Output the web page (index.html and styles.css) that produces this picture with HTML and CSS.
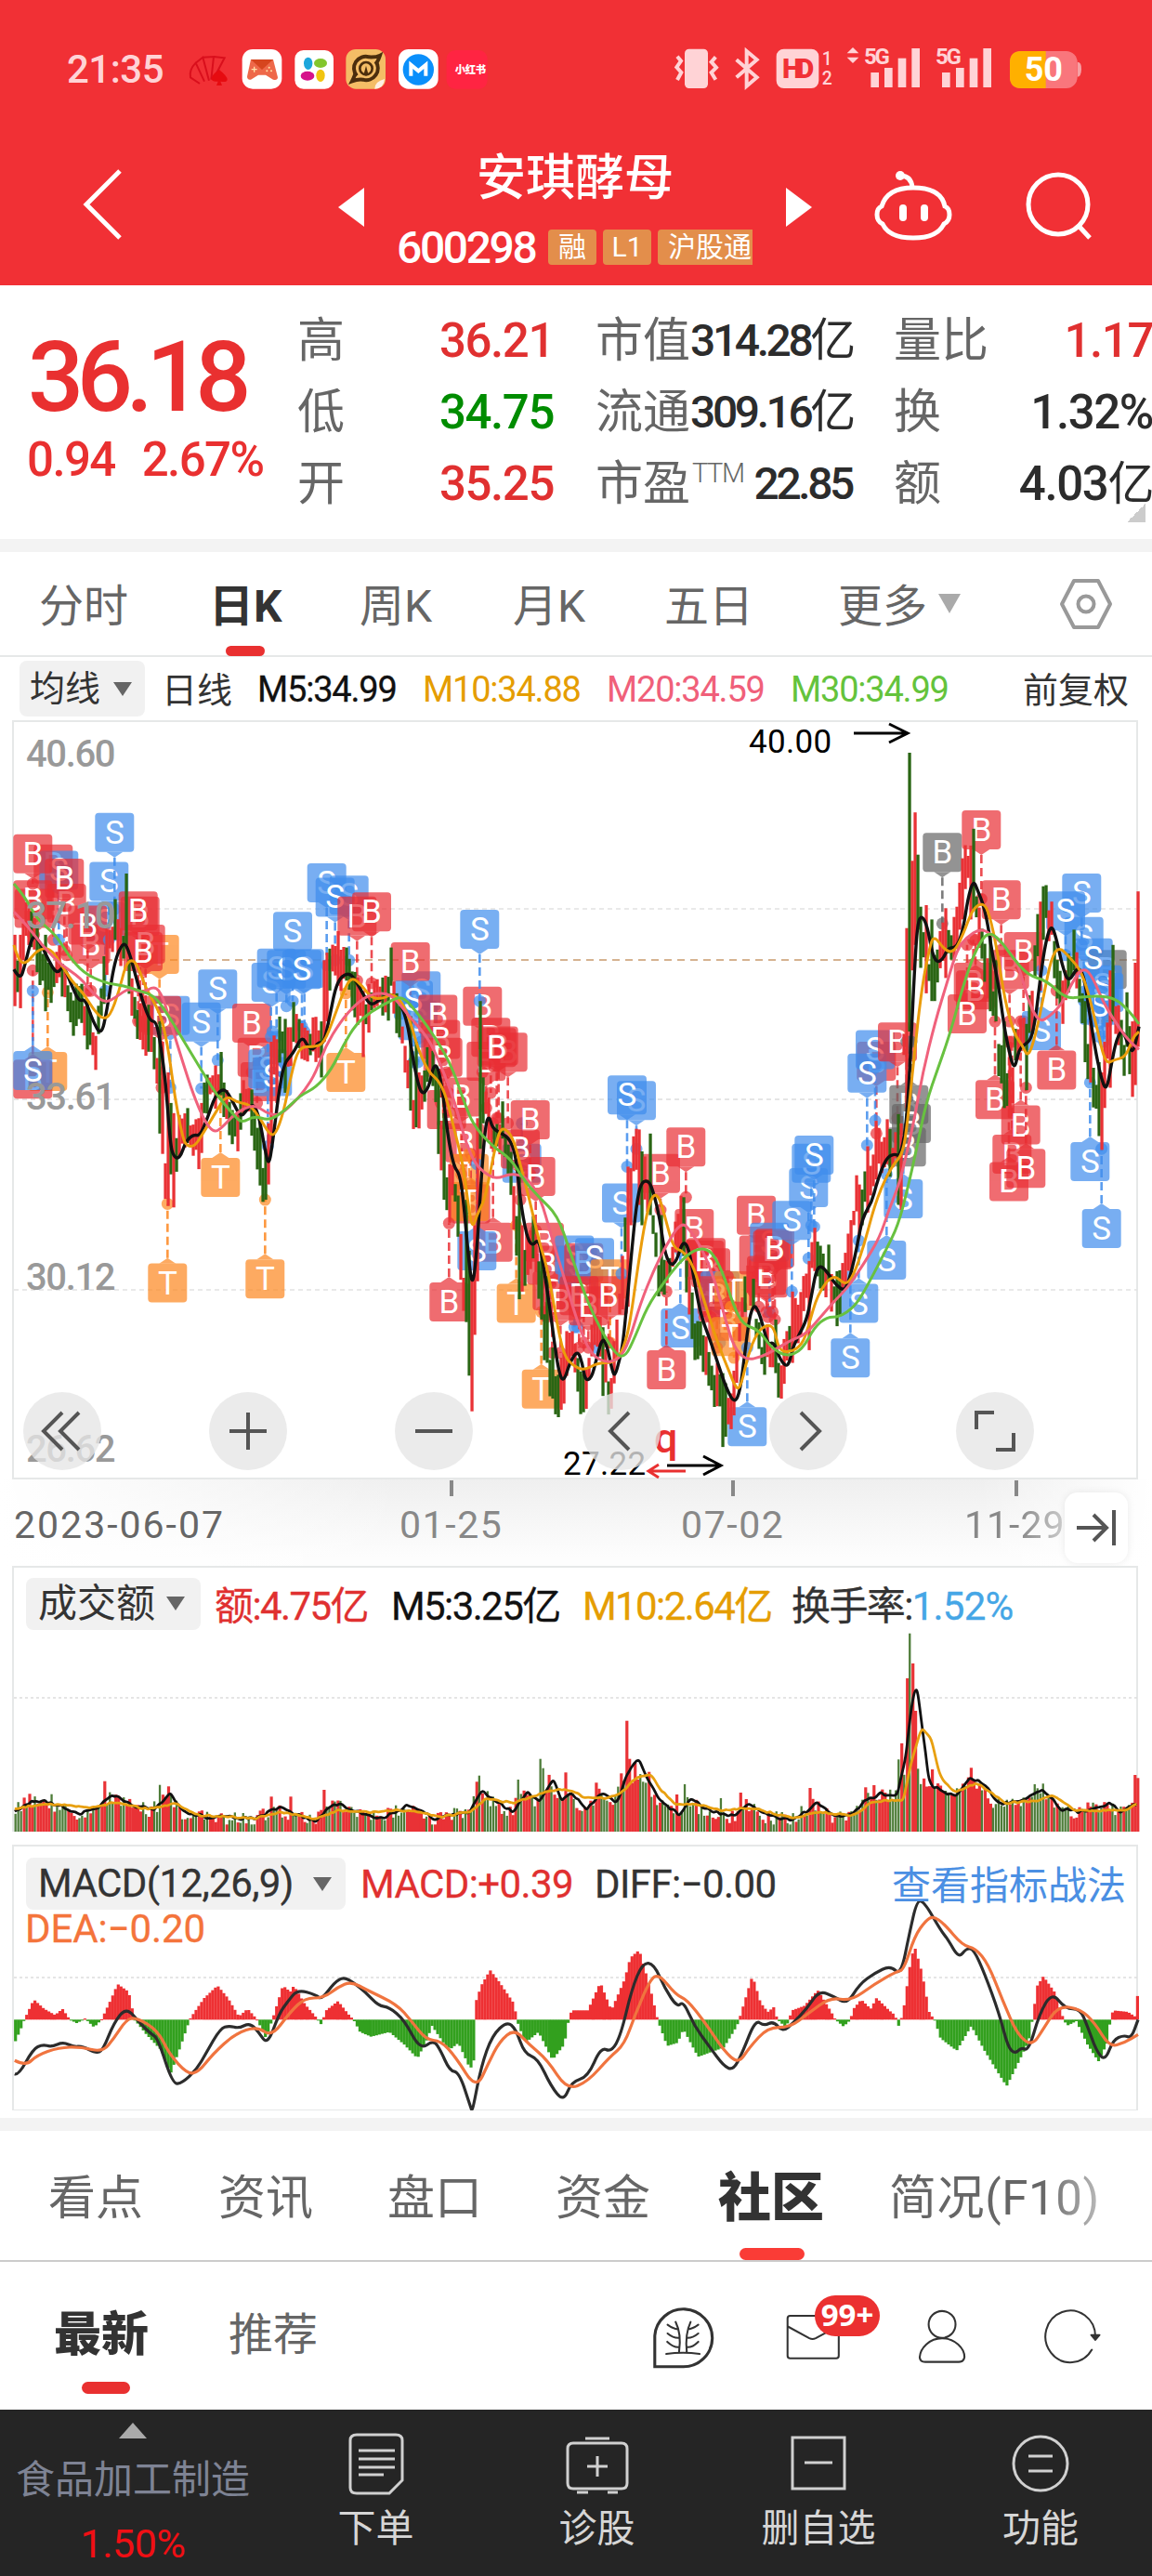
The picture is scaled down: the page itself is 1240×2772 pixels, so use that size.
FILE: index.html
```html
<!DOCTYPE html>
<html lang="zh-CN">
<head>
    <meta charset="UTF-8">
    <meta name="viewport" content="width=device-width, initial-scale=1.0">
    <title>安琪酵母 600298</title>
    <link rel="stylesheet" href="styles.css">
</head>
<body>
    <header class="header">
        <!-- Status bar -->
        <div class="status-bar">
            <span class="clock">21:35</span>
            <svg class="notices" width="340" height="60" viewBox="0 0 1020 180">
                <g fill="none" stroke="#d90f1c" stroke-width="6">
                    <path d="M75 135L45 115Q40 90 62 68L90 128M62 68L85 50L105 125M85 50L120 48L112 122M120 48L155 52L130 100"/>
                </g>
                <path d="M138 90Q165 112 164 122T142 128L147 141H129L134 128Q112 130 113 118T138 90Z" fill="#e60b10"/>
                <rect x="212" y="24" width="128" height="128" rx="34" fill="#fff"/>
                <path d="M240 57H312L327 115Q326 126 312 122L288 107H264L240 122Q228 124 228 112Z" fill="#ee6849"/>
                <path d="M240 57H312L276 90Z" fill="#d6451e"/>
                <path d="M251 80V98M242 89H260" stroke="#ffe2a8" stroke-width="4"/>
                <g fill="#ffe2a8"><circle cx="299" cy="83" r="3"/><circle cx="292" cy="94" r="3"/><circle cx="306" cy="94" r="3"/></g>
                <rect x="382" y="27" width="125" height="125" rx="28" fill="#fff"/>
                <ellipse cx="425" cy="70" rx="14" ry="20" fill="#1ca6dc"/>
                <ellipse cx="465" cy="69" rx="21" ry="15" fill="#83c62c"/>
                <ellipse cx="423" cy="110" rx="22" ry="15" fill="#d6118b"/>
                <ellipse cx="465" cy="109" rx="14" ry="20" fill="#f1c40f"/>
                <rect x="547" y="24" width="128" height="128" rx="32" fill="#f4bd66"/>
                <path d="M582 110A38 38 0 0 1 622 49Q645 50 657 44Q652 60 645 70" fill="none" stroke="#4c2e0d" stroke-width="12"/>
                <path d="M643 63A38 38 0 0 1 602 122Q585 120 567 127Q573 115 577 104" fill="none" stroke="#4c2e0d" stroke-width="12"/>
                <circle cx="612" cy="86" r="20" fill="none" stroke="#4c2e0d" stroke-width="8"/>
                <path d="M612 77L618 100L612 110L606 100Z" fill="#4c2e0d"/>
                <path d="M640 152Q640 128 672 120Q670 150 640 152Z" fill="#fff0e4"/>
                <rect x="717" y="24" width="128" height="128" rx="32" fill="#fff"/>
                <circle cx="781" cy="90" r="50" fill="#0a8ffb"/>
                <path d="M757 110V74L781 94L805 74V110" fill="none" stroke="#fff" stroke-width="12"/>
                <rect x="872" y="27" width="132" height="125" rx="28" fill="#ff2442"/>
                <text x="899" y="103" class="notice-text">小红书</text>
            </svg>
            <svg class="signals" width="470" height="70" viewBox="0 0 1410 210">
                <g fill="#ffd3d6">
                    <rect x="81" y="38" width="75" height="127" rx="14"/>
                    <rect x="377" y="38" width="137" height="127" rx="24"/>
                    <path d="M624 33L643 52H605ZM624 84L643 65H605Z"/>
                    <rect x="682" y="114" width="26" height="48"/><rect x="726" y="99" width="26" height="63"/><rect x="770" y="68" width="26" height="94"/><rect x="814" y="36" width="26" height="126"/>
                    <rect x="912" y="114" width="26" height="48"/><rect x="957" y="99" width="26" height="63"/><rect x="1001" y="68" width="26" height="94"/><rect x="1045" y="36" width="26" height="126"/>
                </g>
                <g fill="none" stroke="#ffd3d6" stroke-width="12">
                    <path d="M57 62L69 77L55 97L70 114L57 138M181 64L167 80L183 98L167 114L181 137"/>
                    <path d="M248 73L314 130L281 158V45L314 73L248 130"/>
                </g>
                <text x="396" y="133" class="hd">HD</text>
                <text x="524" y="90" class="sim">1</text>
                <text x="524" y="153" class="sim">2</text>
                <text x="660" y="86" class="net">5G</text>
                <text x="891" y="86" class="net">5G</text>
                <path d="M1349 80Q1363 80 1362 104T1349 128Z" fill="#f6a0a4"/>
                <rect x="1131" y="45" width="218" height="120" rx="36" fill="#f9767c"/>
                <path d="M1247 45H1167Q1131 45 1131 81V129Q1131 165 1167 165H1247Z" fill="#ffb000"/>
                <text x="1178" y="142" class="battery">50</text>
            </svg>
        </div>
        <!-- Stock title -->
        <div class="nav">
            <svg class="back" width="46" height="80" viewBox="0 0 46 80"><path d="M41 4L5 40L41 76" fill="none" stroke="#fff" stroke-width="5"/></svg>
            <svg class="prev" width="28" height="42" viewBox="0 0 28 42"><path d="M0 21L28 0V42Z" fill="#fff"/></svg>
            <div class="stock">
                <div class="stock-name">安琪酵母</div>
                <div class="stock-code"><span class="code">600298</span><span class="tag">融</span><span class="tag">L1</span><span class="tag tag-cut">沪股通</span></div>
            </div>
            <svg class="next" width="28" height="42" viewBox="0 0 28 42"><path d="M28 21L0 0V42Z" fill="#fff"/></svg>
            <svg class="robot" width="84" height="80" viewBox="0 0 84 80" fill="none" stroke="#fff" stroke-width="5">
                <circle cx="28" cy="7" r="5" fill="#fff" stroke="none"/>
                <path d="M28 7Q40 7 41 20"/>
                <path d="M42 20Q72 20 76 40Q81 42 81 49T75 59Q68 74 42 74T9 59Q3 56 3 49T8 40Q14 20 42 20Z"/>
                <path d="M31 42V52M54 42V52" stroke-width="8" stroke-linecap="round"/>
            </svg>
            <svg class="search" width="76" height="76" viewBox="0 0 76 76" fill="none" stroke="#fff" stroke-width="5"><circle cx="36" cy="35" r="32"/><path d="M58 58L70 71"/></svg>
        </div>
    </header>

    <!-- Quote -->
    <section class="quote">
        <div class="price">
            <div class="price-now">36.18</div>
            <div class="price-change"><span>0.94</span><span>2.67%</span></div>
        </div>
        <div class="cell"><span class="label">高</span><span class="value up">36.21</span></div>
        <div class="cell mid"><span class="label">市值</span><span class="value">314.28<i>亿</i></span></div>
        <div class="cell"><span class="label">量比</span><span class="value up">1.17</span></div>
        <div class="cell"><span class="label">低</span><span class="value down">34.75</span></div>
        <div class="cell mid"><span class="label">流通</span><span class="value">309.16<i>亿</i></span></div>
        <div class="cell"><span class="label">换</span><span class="value">1.32%</span></div>
        <div class="cell"><span class="label">开</span><span class="value up">35.25</span></div>
        <div class="cell mid"><span class="label">市盈<sup>TTM</sup></span><span class="value">22.85</span></div>
        <div class="cell"><span class="label">额</span><span class="value">4.03<i>亿</i></span></div>
        <div class="corner"></div>
    </section>

    <!-- Period tabs -->
    <nav class="period-tabs">
        <span class="tab">分时</span>
        <span class="tab active">日K</span>
        <span class="tab">周K</span>
        <span class="tab">月K</span>
        <span class="tab">五日</span>
        <span class="tab">更多<i class="caret"></i></span>
        <svg width="58" height="58" viewBox="0 0 58 58" fill="none" stroke="#999" stroke-width="4"><path d="M16 4H42L55 29L42 54H16L3 29Z" stroke-linejoin="round"/><circle cx="29" cy="29" r="8.5"/></svg>
    </nav>

    <div class="legend ma-legend">
        <span class="picker">均线<i class="caret"></i></span>
        <span class="dark cjk">日线</span>
        <span class="num black">M5:34.99</span>
        <span class="num gold">M10:34.88</span>
        <span class="num pink">M20:34.59</span>
        <span class="num green">M30:34.99</span>
        <span class="dark adjust cjk">前复权</span>
    </div>

    <!-- Candles -->
    <div class="panel k-panel">
        <svg id="kChart" width="1240" height="817" viewBox="0 775 1240 817"></svg>
        <div class="controls">
            <svg viewBox="0 0 84 84"><path d="M42 22L22 42L42 62M60 22L40 42L60 62"/></svg>
            <svg viewBox="0 0 84 84"><path d="M42 22V62M22 42H62"/></svg>
            <svg viewBox="0 0 84 84"><path d="M22 42H62"/></svg>
            <svg viewBox="0 0 84 84"><path d="M50 22L30 42L50 62"/></svg>
            <svg viewBox="0 0 84 84"><path d="M34 22L54 42L34 62"/></svg>
            <svg viewBox="0 0 84 84"><path d="M22 40V22H41M62 44V62H43"/></svg>
        </div>
    </div>

    <div class="dates">
        <span class="first">2023-06-07</span>
        <span class="tick">01-25</span>
        <span class="tick">07-02</span>
        <span class="tick last">11-29</span>
        <div class="to-end"><svg width="46" height="42" viewBox="0 0 46 42" fill="none" stroke="#555" stroke-width="4"><path d="M2 21H32M20 7L34 21L20 35M42 2V40"/></svg></div>
    </div>

    <!-- Turnover -->
    <div class="panel vol-panel">
        <svg id="volChart" width="1240" height="286" viewBox="0 1685 1240 286"></svg>
        <div class="legend vol-legend">
            <span class="picker">成交额<i class="caret"></i></span>
            <span class="red num">额:4.75亿</span>
            <span class="black num">M5:3.25亿</span>
            <span class="gold num">M10:2.64亿</span>
            <span class="dark num">换手率:<b>1.52%</b></span>
        </div>
    </div>

    <!-- MACD -->
    <div class="panel macd-panel">
        <svg id="macdChart" width="1240" height="286" viewBox="0 1985 1240 286"></svg>
        <div class="legend macd-legend">
            <span class="picker num">MACD(12,26,9)<i class="caret"></i></span>
            <span class="red num">MACD:+0.39</span>
            <span class="dark num">DIFF:−0.00</span>
            <a class="link">查看指标战法</a>
        </div>
        <div class="dea">DEA:−0.20</div>
    </div>

    <nav class="info-tabs">
        <span class="tab">看点</span>
        <span class="tab">资讯</span>
        <span class="tab">盘口</span>
        <span class="tab">资金</span>
        <span class="tab active">社区</span>
        <span class="tab fade">简况(F10)</span>
    </nav>

    <div class="sub-tabs">
        <span class="tab active">最新</span>
        <span class="tab">推荐</span>
        <div class="sub-icons">
            <svg width="540" height="110" viewBox="0 0 1568 319.4" fill="none" stroke="#333" stroke-width="6" stroke-linejoin="round" stroke-linecap="round">
                <path d="M72 252V155A90 90 0 1 1 162 252Z" stroke-width="9" stroke-linejoin="miter"/>
                <path d="M108 212Q160 205 212 212M148 205Q156 150 137 112M172 205Q166 150 184 112M112 121Q130 134 144 135M112 148Q130 163 147 162M111 174Q130 192 147 191M208 121Q190 134 176 135M208 148Q190 163 173 162M208 174Q190 192 173 191"/>
                <rect x="487" y="93" width="160" height="133" rx="8"/>
                <path d="M489 127L555 163Q565 168 575 163L645 125"/>
                <circle cx="970" cy="120" r="42"/>
                <path d="M970 163C1010 163 1040 195 1040 222Q1038 237 1022 237H918Q901 237 900 222C902 195 930 163 970 163Z"/>
                <path d="M1438 199A78 81 0 1 1 1449 158"/>
                <path d="M1436 153H1462L1449 168Z" fill="#333"/>
            </svg>
            <span class="badge">99+</span>
        </div>
    </div>

    <footer class="footer">
        <div class="sector">
            <i class="tri-up"></i>
            <span class="sector-name">食品加工制造</span>
            <span class="sector-rate">1.50%</span>
        </div>
        <div class="action">
            <svg viewBox="0 0 70 70"><path d="M14 4H56Q63 4 63 10V53L49 67H14Q7 67 7 61V10Q7 4 14 4Z"/><path d="M16 21H55M16 30H55M16 39H55M16 47H43"/></svg>
            <span>下单</span>
        </div>
        <div class="action">
            <svg viewBox="0 0 70 70"><path d="M9 13H61Q67 13 67 19V56Q67 62 61 62H9Q3 62 3 56V19Q3 13 9 13ZM22 8H48M35 27V49M24 38H46M13 66H25M46 66H57"/></svg>
            <span>诊股</span>
        </div>
        <div class="action">
            <svg viewBox="0 0 70 70"><path d="M7 7H63V62H7ZM20 34H50"/></svg>
            <span>删自选</span>
        </div>
        <div class="action">
            <svg viewBox="0 0 70 70"><circle cx="35" cy="35" r="29"/><path d="M22 27H48M22 43H48"/></svg>
            <span>功能</span>
        </div>
    </footer>
    <script src="chart.js"></script>
</body>
</html>
```

FILE: styles.css
```css
* {
    box-sizing: border-box;
}

body {
    margin: 0;
    width: 1240px;
    background: #fff;
    color: #333;
    font-family: Roboto, "Noto Sans CJK SC", sans-serif;
}

i, b {
    font-style: normal;
    font-weight: normal;
}

svg {
    display: block;
    flex: none;
}

/* header */
.header {
    height: 307px;
    background: #f13035;
    color: #fff;
}

.status-bar {
    display: flex;
    height: 150px;
    padding: 40px 60px 0 72px;
}

.clock {
    width: 118px;
    font-size: 42px;
    line-height: 69px;
    font-weight: 500;
    letter-spacing: -.5px;
    color: #ffd3d6;
}

.notices {
    margin-top: 5px;
}

.signals {
    margin-left: auto;
}

.notice-text {
    font-size: 34px;
    font-weight: 900;
    letter-spacing: -1px;
    fill: #fff;
}

.hd {
    font-size: 88px;
    font-weight: 900;
    letter-spacing: -16px;
    fill: #f13035;
}

.sim {
    font-size: 58px;
    font-weight: 500;
    fill: #ffd3d6;
}

.net {
    font-size: 72px;
    font-weight: 700;
    letter-spacing: -7px;
    fill: #ffd3d6;
}

.battery {
    font-size: 108px;
    font-weight: 700;
    fill: #fff;
}

.nav {
    display: flex;
    height: 157px;
}

.back {
    margin: 30px 0 0 88px;
}

.prev {
    margin: 52px 0 0 230px;
}

.next {
    margin: 52px 0 0 34px;
}

.robot {
    margin: 32px 0 0 67px;
}

.search {
    margin: 35px 0 0 78px;
}

.stock {
    width: 384px;
    margin-left: 36px;
}

.stock-name {
    padding-top: 4px;
    margin-right: 2px;
    text-align: center;
    font-size: 53px;
    line-height: 76px;
    font-weight: 500;
}

.stock-code {
    display: flex;
    align-items: center;
    height: 72px;
    gap: 7px;
}

.code {
    width: 156px;
    margin-left: -1px;
    font-size: 48px;
    font-weight: 500;
    letter-spacing: -2.4px;
}

.tag {
    width: 52px;
    height: 38px;
    border-radius: 4px;
    background: #e38e4b;
    text-align: center;
    font-size: 30px;
    line-height: 38px;
}

.tag-cut {
    width: 102px;
    padding-left: 11px;
    text-align: left;
    white-space: nowrap;
    border-radius: 4px 0 0 4px;
}

/* quote */
.quote {
    display: grid;
    grid-template-columns: 275px 276px 276px 279px;
    grid-template-rows: repeat(3, 77px) 22px;
    column-gap: 45px;
    height: 287px;
    padding: 20px 0 0 0;
    border-bottom: 14px solid #f3f3f3;
}

.price {
    grid-row: 1 / 4;
    padding-left: 29px;
    color: #e93030;
    font-weight: 500;
    white-space: nowrap;
}

.price-now {
    margin: 19px 0 0 1px;
    font-size: 106px;
    line-height: 120px;
    letter-spacing: -7.5px;
}

.price-change {
    display: flex;
    gap: 29px;
    font-size: 51px;
    line-height: 58px;
    letter-spacing: -1.6px;
}

.cell {
    display: flex;
    justify-content: space-between;
    line-height: 79px;
    white-space: nowrap;
}

.label {
    font-size: 51px;
    color: #666;
}

.label sup {
    margin-left: 2px;
    font-size: 29px;
    font-weight: 300;
    letter-spacing: -1.5px;
    line-height: 0;
    vertical-align: 19px;
}

.value {
    font-size: 51px;
    font-weight: 500;
    letter-spacing: -1.4px;
    color: #2c2c2c;
}

.value i {
    font-size: 50px;
}

.mid .value {
    font-size: 48px;
    letter-spacing: -3.4px;
}

.mid .value i {
    font-size: 49px;
}

.up {
    color: #e03030;
}

.down {
    color: #008c00;
}

.corner {
    grid-column: 4;
    justify-self: end;
    width: 20px;
    height: 20px;
    margin: -16px 8px 0 0;
    background: linear-gradient(135deg, transparent 50%, #ccc 50%);
}

/* tabs */
.tab {
    color: #666;
    white-space: nowrap;
}

.tab.active::after {
    content: "";
    display: block;
    margin: 0 auto;
    border-radius: 7px;
    background: #e93030;
}

.caret {
    display: inline-block;
    border: 12px solid transparent;
    border-top: 21px solid #666;
    border-bottom: 0;
}

.period-tabs {
    display: grid;
    grid-template-columns: 183px 162px 165px 163px 187px 238px 60px;
    height: 113px;
    padding: 24px 0 0 42px;
    border-bottom: 2px solid #e6e8e8;
    font-size: 48px;
    line-height: 70px;
}

.period-tabs .tab.active {
    width: 77px;
    font-weight: 700;
    color: #333;
}

.period-tabs .tab.active::after {
    width: 42px;
    height: 11px;
    margin-top: 7px;
}

.period-tabs .caret {
    margin-left: 12px;
    vertical-align: 9px;
    border-top-color: #aaa;
}

.period-tabs svg {
    margin-top: 3px;
}

/* legends */
.legend {
    display: flex;
    align-items: center;
    height: 60px;
    font-size: 38px;
    white-space: nowrap;
}

.picker {
    display: flex;
    align-items: center;
    justify-content: space-between;
    border-radius: 8px;
    background: #f1f1f1;
    color: #333;
    line-height: 52px;
}

.picker .caret {
    border-width: 15px 10px 0;
}

.dark {
    color: #333;
}

.black {
    color: #111;
}

.gold {
    color: #e59d00;
}

.pink {
    color: #f0607a;
}

.green {
    color: #64c33c;
}

.red {
    color: #e03030;
}

.ma-legend {
    height: 68px;
    padding: 0 0 0 21px;
}

.ma-legend .picker {
    width: 135px;
    height: 60px;
    padding: 0 14px 0 11px;
    margin-right: 18px;
}

.ma-legend .dark {
    width: 103px;
    margin-top: -3px;
}

.ma-legend .black {
    width: 178px;
}

.ma-legend .num {
    margin-top: 2px;
    letter-spacing: -1.2px;
}

.ma-legend .black,
.vol-legend .num,
.macd-legend .num {
    -webkit-text-stroke: .3px;
}

.ma-legend .gold,
.ma-legend .pink {
    width: 198px;
}

.ma-legend .green {
    width: 250px;
}

.ma-legend .adjust {
    width: 116px;
}

/* chart panels */
.panel {
    display: grid;
}

.panel > * {
    grid-column: 1;
    grid-row: 1;
}

.k-panel {
    height: 817px;
}

.controls {
    display: grid;
    grid-template-columns: 200px 200px 202px 201px 201px 84px;
    align-self: end;
    padding: 0 0 10px 25px;
}

.controls svg {
    width: 84px;
    height: 84px;
    border-radius: 50%;
    background: rgba(230, 230, 230, .78);
    fill: none;
    stroke: #555;
    stroke-width: 4;
}

.axis-label {
    font-size: 40px;
    font-weight: 500;
    letter-spacing: -1.4px;
    fill: #999;
}

.extreme-label {
    font-size: 35px;
    letter-spacing: .3px;
    fill: #000;
}

.mark-letter {
    font-size: 35px;
    text-anchor: middle;
    fill: #fff;
}

.q-mark {
    font-size: 45px;
    font-weight: 500;
    fill: #e93030;
}

.dates {
    display: grid;
    grid-template-columns: 415px 303px 305px 108px 68px;
    height: 93px;
    padding-left: 15px;
    background: linear-gradient(90deg, #fff, rgba(255, 255, 255, 0) 35%, rgba(255, 255, 255, 0) 85%, #fff), linear-gradient(#efefef, #fdfdfd 90%);
    font-size: 41px;
    line-height: 99px;
    letter-spacing: 1.6px;
    color: #666;
    white-space: nowrap;
}

.dates .first {
    letter-spacing: 2px;
}

.tick {
    color: #888;
    background: linear-gradient(#888, #888) 54px 1px / 4px 17px no-repeat;
}

.tick.last {
    letter-spacing: 1px;
    -webkit-mask-image: linear-gradient(90deg, #000 55%, rgba(0, 0, 0, .4));
}

.to-end {
    display: flex;
    align-items: center;
    justify-content: center;
    width: 68px;
    height: 76px;
    margin-top: 14px;
    border-radius: 14px;
    background: #fff;
    box-shadow: 0 0 8px rgba(0, 0, 0, .08);
}

.vol-panel {
    height: 300px;
}

.vol-legend {
    padding-left: 28px;
    margin-top: 9px;
    font-size: 42px;
}

.vol-legend .picker {
    width: 188px;
    height: 56px;
    padding: 0 17px 0 13px;
    margin: 3px 15px 0 0;
}

.vol-legend .red {
    width: 190px;
}

.vol-legend .black {
    width: 206px;
}

.vol-legend .gold {
    width: 225px;
}

.vol-legend .num {
    letter-spacing: -1.6px;
}

.vol-legend b {
    letter-spacing: -.8px;
    color: #45a6e6;
}

.macd-panel {
    height: 294px;
    align-content: start;
}

.macd-panel svg,
.vol-panel svg {
    grid-row: 1 / 3;
}

.macd-legend {
    padding: 0 28px;
    margin-top: 12px;
    font-size: 42px;
}

.macd-legend .picker {
    width: 344px;
    height: 56px;
    padding: 0 15px 0 13px;
    margin-right: 16px;
}

.macd-legend .num {
    letter-spacing: -.6px;
}

.macd-legend .red {
    width: 252px;
}

.link {
    margin: -3px 0 0 auto;
    font-size: 42px;
    color: #4b8fe3;
}

.macd-panel .dea {
    grid-row: 2;
    height: 214px;
    padding-left: 27px;
    font-size: 42px;
    line-height: 38px;
    letter-spacing: -.1px;
    color: #f4743b;
    -webkit-text-stroke: .3px;
}

/* info tabs */
.info-tabs {
    display: grid;
    grid-template-columns: 183px 182px 181px 175px 184px 240px;
    height: 155px;
    padding: 32px 0 0 52px;
    border-top: 14px solid #f3f3f3;
    border-bottom: 2px solid #ccc;
    font-size: 51px;
    line-height: 82px;
}

.info-tabs .tab.active {
    width: 115px;
    font-size: 57px;
    font-weight: 900;
    color: #333;
}

.info-tabs .active::after {
    width: 70px;
    height: 13px;
    margin-top: 12px;
    background: #fa3c36;
}

.fade {
    letter-spacing: .6px;
    -webkit-mask-image: linear-gradient(90deg, #000 68%, rgba(0, 0, 0, .4) 97%);
}

.sub-tabs {
    display: flex;
    height: 159px;
    padding: 41px 0 0 58px;
    font-size: 48px;
    line-height: 76px;
}

.sub-tabs .tab {
    width: 188px;
}

.sub-tabs .active {
    width: 102px;
    margin-right: 86px;
    font-size: 51px;
    font-weight: 900;
    color: #333;
}

.sub-tabs .active::after {
    width: 52px;
    height: 13px;
    margin: 12px 0 0 30px;
}

.sub-icons {
    position: relative;
    width: 540px;
    margin: -15px 0 0 246px;
}

.badge {
    position: absolute;
    left: 197px;
    top: 10px;
    width: 70px;
    height: 44px;
    border-radius: 22px;
    background: #eb3030;
    color: #fff;
    text-align: center;
    font-family: "Noto Sans", sans-serif;
    font-size: 33px;
    font-weight: 700;
    line-height: 42px;
}

/* footer */
.footer {
    display: grid;
    grid-template-columns: 286px 237px 239px 238px 240px;
    height: 180px;
    background: #252525;
}

.sector {
    display: flex;
    flex-direction: column;
    align-items: center;
    padding-top: 14px;
}

.tri-up {
    border: 15px solid transparent;
    border-top: 0;
    border-bottom: 17px solid #aaa;
}

.sector-name {
    margin-top: 15px;
    font-size: 42px;
    line-height: 60px;
    color: #7e8394;
}

.sector-rate {
    margin-top: 10px;
    font-size: 43px;
    line-height: 56px;
    letter-spacing: -.5px;
    color: #f00f14;
}

.action {
    display: flex;
    flex-direction: column;
    align-items: center;
    padding-top: 23px;
    font-size: 41px;
    line-height: 60px;
    color: #d6d6d6;
}

.action svg {
    width: 70px;
    height: 70px;
    margin-bottom: 5px;
    fill: none;
    stroke: #d0d0d0;
    stroke-width: 3;
}
```

FILE: chart.js
```js
const RED = '#e93236', GREEN = '#2a6614';

// x is stored in thirds of a pixel, y in chart units
const kx = x => x / 3;
const ky = y => 770 + y * 0.5485;
// lower panels
const px = x => x / 1.2645;
const volY = y => 1580 + y / 3;
const macdY = y => 1980 + y / 3;

let seed = 7;
function rand() {
    seed = (seed * 16807) % 2147483647;
    return seed / 2147483647;
}

function parse(text) {
    return text.trim().split(/[;\s]+/).filter(Boolean).map(p => p.split(',').map(Number));
}

function at(points, x) {
    if (x <= points[0][0]) return points[0][1];
    for (let i = 1; i < points.length; i++) {
        const [x0, y0] = points[i - 1], [x1, y1] = points[i];
        if (x <= x1) return x1 === x0 ? y1 : y0 + (y1 - y0) * (x - x0) / (x1 - x0);
    }
    return points[points.length - 1][1];
}

function line(points, sx, sy, color, width) {
    const p = points.map(([x, y]) => [sx(x), sy(y)]);
    let d = `M${p[0][0].toFixed(1)} ${p[0][1].toFixed(1)}`;
    for (let i = 1; i < p.length - 1; i++) {
        const mx = (p[i][0] + p[i + 1][0]) / 2, my = (p[i][1] + p[i + 1][1]) / 2;
        d += `Q${p[i][0].toFixed(1)} ${p[i][1].toFixed(1)} ${mx.toFixed(1)} ${my.toFixed(1)}`;
    }
    d += `L${p[p.length - 1].join(' ')}`;
    return `<path d="${d}" fill="none" stroke="${color}" stroke-width="${width}" stroke-linejoin="round"/>`;
}

// one sample per bar with a little daily noise
function daily(points, noise) {
    const out = [];
    for (let x = points[0][0]; x <= 1549; x += 3.78) {
        out.push([x, at(points, x) + (rand() - .5) * noise]);
    }
    return out;
}

function rect(x, y, w, h, fill, extra = '') {
    return `<rect x="${x.toFixed(1)}" y="${y.toFixed(1)}" width="${w}" height="${Math.max(h, 1).toFixed(1)}" fill="${fill}" ${extra}/>`;
}

const ma5 = parse(`45,498;65,520;80,490;105,430;125,440;155,478;183,508;205,490;225,520;255,562;275,555;300,600;327,628;345,580;370,480;400,442;418,465;440,515;460,560;485,600;505,600;520,650;535,720;550,840;560,865;580,870;600,835;625,822;645,825;670,790;695,745;725,730;750,755;778,790;800,770;820,762;838,790;855,850;868,885;880,840;900,740;918,680;945,665;975,628;995,650;1010,656;1030,640;1045,645;1065,590;1088,520;1125,503;1150,520;1175,550;1200,570;1230,555;
1265,545;1290,560;1315,600;1330,660;1345,710;1362,745;1385,730;1400,685;1415,690;1430,740;1445,820;1465,885;1485,900;1498,960;1512,1060;1526,1125;1540,1050;1555,900;1568,800;1580,785;1590,810;1620,820;1645,830;1665,860;1680,950;1700,1020;1718,1042;1740,1025;1755,1080;1775,1160;1790,1230;1805,1290;1820,1308;1840,1270;1865,1245;1880,1270;1890,1305;1910,1300;1925,1265;1945,1220;1960,1235;1975,1280;1985,1298;2000,1265;2012,1230;2025,1150;2040,1050;2055,960;2070,915;2095,912;2110,935;2130,985;2145,1050;2165,1080;2185,1070;2205,1030;2225,1045;2245,1120;2265,1180;2290,1220;2315,1265;2345,1320;2372,1350;2390,1325;2405,1250;2420,1180;2435,1155;2450,1170;
2465,1200;2480,1235;2498,1228;2520,1265;2545,1280;2560,1240;2580,1215;2605,1185;2620,1140;2635,1090;2650,1078;2675,1095;2700,1118;2730,1130;2750,1090;2768,1040;2785,985;2815,955;2830,920;2850,885;2868,865;2890,860;2905,865;2920,830;2932,760;2942,640;2953,500;2963,405;2978,392;2995,415;3010,465;3025,485;3045,478;3062,455;3090,455;3110,420;3125,360;3143,322;3158,345;3175,370;3190,410;3205,470;3225,530;3240,600;3255,650;3275,698;3290,655;3310,645;3330,635;3345,590;3360,510;3378,440;3395,410;3410,435;3430,490;3450,525;3480,492;3500,510;3515,570;3535,650;3555,710;3573,738;3590,680;3605,635;3625,615;3645,650;3660,662;3678,610`);

const ma10 = parse(`45,450;60,482;85,487;120,460;160,455;195,485;230,520;270,545;300,575;330,595;355,590;385,540;405,490;425,478;445,490;470,535;505,570;525,600;545,660;565,750;590,830;605,845;630,845;660,815;700,775;730,745;770,760;805,762;840,790;870,822;890,822;915,780;940,705;965,650;1010,650;1045,645;1080,590;1110,540;1135,512;1170,530;1200,555;1240,555;
1265,545;1295,560;1320,590;1350,655;1385,700;1415,715;1440,745;1470,820;1495,880;1510,950;1525,1008;1540,980;1565,950;1585,890;1605,830;1622,806;1655,825;1680,880;1710,950;1740,1030;1770,1090;1795,1180;1820,1255;1850,1275;1885,1285;1930,1270;1985,1270;2015,1240;2035,1190;2060,1080;2085,985;2108,938;2130,945;2150,990;2175,1045;2205,1050;2235,1075;2260,1120;2290,1180;2320,1235;2350,1280;2380,1325;2395,1310;2415,1255;2445,1210;
2475,1195;2500,1200;2515,1245;2550,1250;2590,1235;2610,1200;2640,1135;2690,1095;2730,1118;2755,1100;2790,1040;2820,970;2850,920;2885,880;2915,860;2930,800;2950,680;2975,540;3000,460;3015,430;3050,460;3080,465;3110,430;3140,380;3175,366;3195,390;3220,460;3245,560;3275,625;3300,645;3320,672;3345,625;3370,550;3395,475;3420,453;3455,475;3490,500;3515,545;3545,620;3570,684;3600,675;3635,670;3660,630;3678,620`);

const ma20 = parse(`45,385;70,400;110,430;150,460;200,490;260,515;300,545;340,565;380,550;415,535;460,545;500,530;525,550;555,610;590,680;625,745;660,795;690,818;715,810;760,780;820,762;860,780;900,785;940,765;985,735;1020,700;1050,650;1100,600;1150,565;1200,545;
1265,545;1320,590;1380,630;1420,680;1470,760;1500,830;1530,875;1560,895;1600,910;1650,898;1700,905;1745,945;1780,1020;1830,1120;1870,1200;1910,1255;1960,1270;2000,1262;2030,1230;2070,1150;2110,1090;2150,1040;2200,993;2230,1010;2270,1050;2310,1110;2340,1180;2370,1240;2410,1265;
2460,1258;2500,1245;2555,1225;2600,1215;2650,1180;2700,1145;2740,1120;2790,1075;2840,1025;2870,970;2900,925;2920,880;2950,800;2980,700;3020,600;3060,520;3090,460;3120,435;3165,418;3200,428;3250,455;3290,490;3320,560;3355,602;3390,590;3430,565;3465,520;3500,493;3530,515;3560,560;3600,600;3640,635;3678,655`);

const ma30 = parse(`45,330;80,355;120,400;180,430;220,470;270,505;340,525;400,530;450,540;500,550;540,585;580,625;620,665;660,705;700,745;750,780;780,800;820,785;870,795;920,775;970,745;1020,730;1070,695;1110,645;1150,605;1200,580;
1260,560;1300,550;1350,585;1410,635;1460,690;1500,760;1530,805;1590,845;1650,870;1690,910;1740,945;1800,980;1840,1050;1890,1140;1940,1205;1990,1255;2020,1258;2050,1220;2090,1160;2140,1115;2190,1075;2240,1048;2290,1045;2330,1085;2370,1160;2400,1195;2450,1205;
2490,1240;2540,1258;2590,1245;2630,1200;2670,1180;2710,1180;2760,1160;2800,1120;2860,1050;2900,1000;2930,930;2960,850;2990,760;3030,690;3070,620;3110,530;3150,460;3190,423;3230,440;3270,475;3320,510;3380,520;3440,555;3500,552;3550,550;3600,555;3640,575;3678,605`);

// known days: x, high, low, 1 = up
const days = parse(`50,430,570,1;68,430,574,1;147,430,580,0;285,560,655,0;370,360,440,0;407,310,450,0;460,560,655,1;515,600,820,0;524,640,860,1;541,700,962,1;550,760,900,0;560,780,965,1;640,790,890,1;650,760,858,1;659,720,780,0;712,660,745,0;766,780,855,1;836,790,922,0;856,850,950,0;865,800,920,1;873,640,840,1;895,635,760,1;919,595,740,0;946,562,640,0;1036,600,710,0;1045,480,640,1;1054,465,600,1;1090,423,530,1;1117,455,520,0;1170,540,670,1;
1260,455,530,0;1325,590,775,0;1341,640,808,0;1350,700,810,1;1415,700,860,0;1432,780,950,0;1450,880,995,1;1505,950,1190,0;1514,1050,1295,0;1523,1100,1365,1;1532,1000,1215,1;1541,790,1110,1;1549,560,850,0;1558,710,800,0;1621,757,830,0;1675,880,1145,0;1685,1000,1130,1;1748,1050,1185,0;1765,1100,1270,0;1783,1240,1340,0;1815,1260,1362,1;1823,1250,1350,1;1890,1280,1360,1;1945,1200,1335,0;1970,1300,1360,1;1992,1185,1260,1;2010,1060,1165,1;2028,885,1160,1;2037,888,1000,1;2063,812,960,1;2075,855,1000,0;2098,820,980,0;2135,980,1130,0;2195,942,1050,1;2206,945,1060,0;2315,1270,1355,1;2333,1290,1435,0;2342,1310,1415,0;2360,1330,1400,1;2433,1105,1160,0;
2505,1185,1290,0;2513,1270,1338,0;2522,1275,1340,1;2557,1130,1270,1;2610,1070,1245,1;2628,1005,1090,1;2638,1032,1100,0;2673,1038,1110,0;2701,1090,1198,0;2745,990,1090,1;2773,920,1020,1;2782,930,1000,0;2800,845,975,1;2827,795,910,1;2863,792,880,1;2898,782,960,0;2907,800,970,1;2925,417,770,1;2935,73,620,0;2944,285,500,1;2953,190,450,1;2963,273,420,0;2972,375,495,0;2990,372,545,1;3005,400,560,0;3015,470,560,0;3055,378,515,1;3096,328,420,1;3105,280,400,1;3132,255,400,1;3143,222,380,0;3195,430,580,0;3215,480,600,0;3243,600,770,0;3257,640,790,1;3266,690,760,1;3313,605,735,0;3331,540,620,1;3358,365,540,1;3367,335,440,0;3395,365,430,1;3435,520,605,1;3470,420,500,0;3505,560,680,0;3520,600,720,1;3547,680,825,0;3557,700,852,1;3570,640,770,1;3582,500,730,1;3593,450,600,0;3637,543,650,0;3657,600,748,1;3667,485,725,1;3675,345,650,1`);

function candles() {
    let out = '';
    for (let x = 48; x <= 3678; x += 9) {
        const a = at(ma5, x + 18), b = at(ma5, x - 18);
        let top = a - 12 - rand() * 38, low = a + 14 + rand() * 38;
        const shift = (a - b) * .35;
        const known = days.find(d => Math.abs(d[0] - x) <= 4.5);
        let up = rand() < (a < b ? .72 : .42);
        if (known) {
            top = known[1];
            low = known[2];
            up = known[3];
        } else {
            top += shift;
            low += shift;
        }
        out += rect(kx(x) - 1.6, ky(top), 3.3, ky(low) - ky(top), up ? RED : GREEN);
    }
    return out;
}

// trade marks: letter, center x, box top, d(own) or u(p) pointer, stem end
const marks = `B 172 253 d 440;S 190 265 d 440;B 110 340 d 430;B 106 323 d 430;B 106 233 d 330;B 215 330 d 470;B 208 281 d 460;S 340 365 d 540;B 293 410 d 540;B 283 373 d 540;S 352 287 d 440;S 370 191 d 380;T 515 430 d 600;B 452 355 d 600;B 446 345 d 600;B 470 410 d 610;B 462 425 d 610;S 550 550 d 730;B 522 550 d 730;T 154 660 u 543;B 106 675 u 500;S 106 658 u 540;S 650 563 d 732;S 703 498 d 676;T 712 868 u 740;T 541 1075 u 958;T 856 1067 u 950;B 813 565 d 700;B 830 632 d 760;B 840 680 u 720;S 865 655 u 845;S 880 670 u 620;S 875 485 d 630;S 893 457 d 630;S 945 385 d 560;S 925 460 d 570;S 983 458 d 620;S 975 460 d 610;S 1055 290 d 490;S 1127 314 d 480;S 1082 318 d 480;B 1153 355 d 520;B 1200 347 d 525;T 1117 662 u 545;
S 1360 502 d 640;B 1325 445 d 600;S 1350 560 d 680;S 1335 520 d 680;B 1414 548 d 700;B 1423 597 d 760;B 1430 632 d 800;B 1442 735 u 700;B 1490 710 d 900;B 1500 800 d 920;T 1515 860 d 960;B 1520 920 u 860;T 1515 915 u 860;B 1450 1112 u 996;B 1592 995 u 800;S 1540 1012 u 880;B 1558 532 d 700;S 1549 381 d 560;B 1585 593 d 740;B 1570 640 d 770;B 1640 622 d 800;B 1610 610 d 790;B 1604 613 d 790;S 1685 840 u 800;T 1667 1115 u 1000;T 1748 1283 u 1170;B 1712 755 d 900;B 1680 812 d 950;B 1730 866 d 1010;B 1758 995 d 1170;B 1765 1040 d 1180;B 1783 1090 d 1250;B 1810 1110 d 1250;S 1865 1040 d 1200;S 1855 1020 d 1200;B 1885 1035 d 1230;S 1920 1025 d 1240;T 1970 1067 d 1230;B 1870 1100 d 1240;B 1900 1120 d 1240;B 1965 1100 d 1230;S 2007 918 d 1095;S 2055 717 d 850;S 2025 706 d 885;B 2133 860 d 970;B 2215 808 d 945;S 2197 1163 u 1050;B 2152 1245 u 1130;B 2242 968 d 1080;B 2280 1025 d 1150;B 2295 1045 d 1180;B 2275 1030 d 1180;S 2325 1090 d 1230;B 2315 1100 d 1240;T 2370 1090 d 1260;B 2350 1150 u 1100;T 2360 1180 u 1160;B 2442 942 d 1100;B 2450 1020 d 1160;B 2480 1065 d 1180;S 2413 1357 u 1240;
S 2485 995 d 1170;B 2475 1060 d 1170;B 2495 1010 d 1170;B 2502 1007 d 1185;S 2557 952 d 1130;S 2611 888 d 1065;S 2620 840 d 1000;S 2629 824 d 1003;S 2746 1222 u 1100;S 2773 1115 u 1030;S 2863 1030 u 900;S 2917 910 u 860;B 2830 640 d 820;S 2826 617 d 795;S 2800 663 d 843;B 2898 602 d 790;G 2935 725 u 640;G 2943 762 u 640;G 2927 808 u 640;G 3043 230 d 408;B 3143 485 u 440;B 3150 500 u 440;B 3123 547 u 450;B 3169 186 d 360;B 3233 323 d 460;B 3260 460 d 600;B 3305 425 d 600;B 3213 715 u 600;B 3268 822 u 640;B 3258 876 u 640;B 3296 765 u 600;B 3313 850 u 730;S 3363 580 u 500;B 3412 657 u 540;S 3500 395 d 560;S 3493 310 d 450;S 3441 345 d 470;G 3575 460 d 600;S 3565 505 d 640;S 3560 490 d 620;S 3550 530 d 630;S 3530 437 d 600;S 3520 837 u 720;S 3557 968 u 850`;

const markColors = { B: '#e92e34', S: '#3f8ded', T: '#fd871f', G: '#666' };

function drawMarks() {
    return marks.split(';').map(m => {
        const [letter, mx, my, dir, end] = m.trim().split(' ');
        const c = markColors[letter], x = kx(+mx), y = ky(+my), e = ky(+end);
        const tip = dir === 'd' ? y + 48 : y - 6;
        const arrow = dir === 'd' ? `M${x - 9} ${y + 42}H${x + 9}L${x} ${tip}Z` : `M${x - 9} ${y}H${x + 9}L${x} ${tip}Z`;
        return `<path d="M${x} ${tip}V${e}" stroke="${c}" stroke-width="2.6" stroke-dasharray="9 5" opacity=".85"/>
            <circle cx="${x}" cy="${e}" r="6.5" fill="${c}" opacity=".7"/>
            <g fill="${c}" opacity=".7">${rect(x - 21, y, 42, 42, c, 'rx="4"')}<path d="${arrow}"/></g>
            <text x="${x}" y="${y + 33}" class="mark-letter">${letter === 'G' ? 'B' : letter}</text>`;
    }).join('');
}

function frame(y, h) {
    return `<rect x="14" y="${y}" width="1210" height="${h}" fill="none" stroke="#e6e8e8" stroke-width="2"/>`;
}

function grid(y, color, dash) {
    return `<path d="M15 ${y}H1224" stroke="${color}" stroke-width="1.5" stroke-dasharray="${dash}"/>`;
}

document.getElementById('kChart').innerHTML =
    frame(776, 815) +
    grid(978, '#e2e2e2', '5 4') + grid(1183, '#ddd', '5 4') + grid(1388, '#e2e2e2', '5 4') + grid(1033, '#c99b6d', '8 6') +
    drawMarks() + candles() +
    line(ma5, kx, ky, '#111', 3.4) + line(ma10, kx, ky, '#eb9c0a', 3) +
    line(ma20, kx, ky, '#f0617c', 3) + line(ma30, kx, ky, '#68c140', 3) +
    [['40.60', 825], ['37.10', 999], ['33.61', 1194], ['30.12', 1388], ['26.62', 1573]]
        .map(([t, y]) => `<text x="28" y="${y}" class="axis-label">${t}</text>`).join('') +
    `<text x="806" y="810" class="extreme-label">40.00</text>
    <path d="M919 789H977M957 779L977 789L957 799" fill="none" stroke="#000" stroke-width="3"/>
    <text x="606" y="1587" class="extreme-label">27.22</text>
    <path d="M738 1583H698M709 1576L698 1583L709 1590" fill="none" stroke="#e93030" stroke-width="3"/>
    <path d="M718 1577H776M757 1567L776 1577L757 1587" fill="none" stroke="#000" stroke-width="3"/>
    <text x="704" y="1563" class="q-mark">q</text>`;

// turnover
const vol5 = parse(`20,1110;45,1070;70,1080;110,1115;130,1100;155,1055;170,1080;210,1105;232,1050;250,1110;280,1125;350,1130;380,1095;400,1115;430,1140;455,1080;480,1105;520,1130;558,1085;590,1130;640,1110;655,1038;680,1080;698,1110;718,1046;735,1080;752,1003;765,1070;780,1050;798,1103;820,1045;840,1080;855,980;869,942;885,1020;900,1075;925,1120;940,1065;960,1100;1000,1125;1020,1083;1045,1120;1080,1135;1112,1083;1135,1120;1155,1125;1180,1070;1200,1050;1220,1060;1232,950;1242,740;1248,705;1256,850;1265,1020;1300,1060;1322,998;1340,1020;1360,1085;1390,1070;1420,1036;1445,1100;1470,1110;1510,1080;1525,1110;1549,1080`);
const vol10 = parse(`20,1100;60,1082;120,1095;160,1078;200,1100;240,1082;270,1120;350,1130;380,1110;430,1132;460,1105;500,1110;558,1104;600,1125;640,1110;660,1068;700,1080;745,1045;770,1035;800,1065;830,1065;850,1040;865,1000;885,985;900,1040;920,1085;950,1085;980,1105;1020,1095;1080,1130;1110,1110;1160,1120;1190,1075;1230,1070;1240,950;1255,835;1268,880;1280,1000;1300,1045;1330,1016;1350,1050;1370,1080;1410,1075;1430,1055;1465,1105;1500,1105;1530,1105;1549,1080`);
const spikes = parse(`72,1052,0;141,1010,1;217,1022,0;228,1027,1;368,1060,1;395,1060,1;441,1038,1;648,1012,1;652,992,0;706,1005,0;737,938,0;741,968,0;771,982,1;812,1015,1;846,985,1;854,815,1;858,938,1;865,950,1;884,980,1;922,1053,1;934,1020,0;982,1065,0;1009,1047,1;1101,1032,1;1180,1030,1;1191,1023,1;1222,940,0;1226,888,1;1234,678,1;1237,533,0;1241,630,1;1245,783,1;1249,970,0;1268,972,1;1321,967,1;1408,1020,0;1420,1018,0;1545,990,1;1549,1000,1`);

let bars = '';
for (let x = 21.5; x < 1549; x += 3.78) {
    const spike = spikes.find(s => Math.abs(s[0] - x) < 1.9);
    const top = spike ? spike[1] : Math.min(1150, Math.max(at(vol5, x + 4), 1000) + (rand() - .45) * 46);
    const up = spike ? spike[2] : rand() < .55;
    bars += rect(px(x) - 1.5, volY(top), up ? 3.2 : 2.3, volY(1175) - volY(top), up ? RED : '#4d7c38');
}
document.getElementById('volChart').innerHTML = frame(1686, 285) + grid(1827, '#ddd', '3 3') + bars +
    line(daily(vol5, 12), px, volY, '#111', 2.8) + line(daily(vol10, 7), px, volY, '#e8a010', 2.8);

// MACD
const hist = parse(`20,-75;30,-20;33,0;46,65;60,35;75,15;85,35;95,0;105,-12;115,5;128,-25;138,0;150,60;160,115;175,90;183,0;200,-50;220,-100;232,-175;245,-90;258,0;262,15;278,70;296,110;310,70;325,10;337,35;350,0;362,-60;372,10;385,110;395,90;400,110;415,50;430,8;437,-15;444,30;460,60;475,15;481,0;490,-40;505,-55;530,-40;550,-80;568,-125;580,-70;588,-20;605,-80;613,-95;624,-75;640,-160;645,-130;648,60;655,110;667,160;680,120;700,50;703,0;715,-75;733,-40;752,-130;768,-80;774,0;778,30;800,30;817,120;832,30;850,130;858,200;870,225;885,100;895,0;908,-85;922,-75;930,-30;950,-120;985,-90;1003,-20;1006,0;1024,142;1035,55;1045,25;1053,40;1058,0;1070,-25;1078,30;1095,45;1113,95;1130,30;1137,0;1148,-22;1158,0;1160,30;1172,65;1185,35;1193,70;1210,30;1218,15;1223,-20;1229,20;1240,200;1245,235;1255,150;1265,20;1272,0;1280,-60;1302,-100;1322,-20;1340,-100;1370,-215;1400,-70;1405,0;1412,110;1420,140;1435,90;1447,5;1452,-20;1465,-5;1480,-80;1495,-135;1508,-70;1511,0;1515,30;1535,25;1545,10;1549,95`);
const diff = parse(`20,755;25,760;45,675;58,660;70,668;86,652;100,668;112,665;130,688;140,680;155,590;172,540;190,590;205,625;215,640;235,788;248,785;268,740;280,690;300,608;312,600;325,608;340,590;352,620;364,662;380,560;392,520;405,483;430,500;438,515;455,460;468,442;482,462;497,490;515,535;530,540;550,580;572,678;590,645;600,680;612,745;625,750;641,865;642,871;644,865;655,730;670,630;690,586;702,610;714,690;732,705;750,795;767,845;778,780;800,765;818,668;832,685;845,630;860,480;875,396;890,400;905,480;922,540;930,520;945,600;965,665;985,730;998,743;1010,690;1028,580;1040,600;1053,585;1065,620;1080,590;1098,545;1115,486;1135,505;1153,530;1170,465;1190,430;1212,405;1226,438;1238,300;1248,195;1258,200;1280,290;1290,320;1305,382;1315,350;1325,352;1340,430;1360,560;1372,670;1382,690;1390,670;1400,680;1415,560;1432,492;1450,545;1470,545;1480,600;1492,680;1504,714;1515,645;1530,630;1540,640;1549,580`);
const dea = parse(`20,712;35,730;50,695;80,670;110,668;140,685;155,640;172,580;185,572;215,615;230,690;255,755;270,750;290,690;320,625;350,602;370,635;395,555;415,510;440,510;460,475;478,457;500,485;540,530;560,585;580,645;600,648;620,700;648,805;665,720;680,650;700,610;720,660;745,710;772,807;800,780;830,700;850,660;865,560;885,450;897,433;920,500;935,515;960,590;985,680;1005,723;1020,670;1045,605;1075,605;1100,560;1130,508;1158,520;1190,465;1220,425;1230,420;1245,310;1260,260;1270,246;1285,270;1310,340;1328,350;1345,400;1365,520;1385,630;1405,665;1420,610;1440,535;1470,545;1490,590;1510,668;1530,655;1549,628`);

let macdBars = '';
for (let x = 21; x < 1551; x += 3.78) {
    const v = at(hist, x) / 3;
    macdBars += rect(px(x) - 1.5, v > 0 ? macdY(580) - v : macdY(580), 3.2, Math.abs(v), v > 0 ? '#ee3033' : '#32a01e');
}
document.getElementById('macdChart').innerHTML = frame(1986, 285) + grid(2128, '#ddd', '3 3') + macdBars +
    line(diff, px, macdY, '#2c2c2c', 3.2) + line(dea, px, macdY, '#f0743f', 3.2);
```
